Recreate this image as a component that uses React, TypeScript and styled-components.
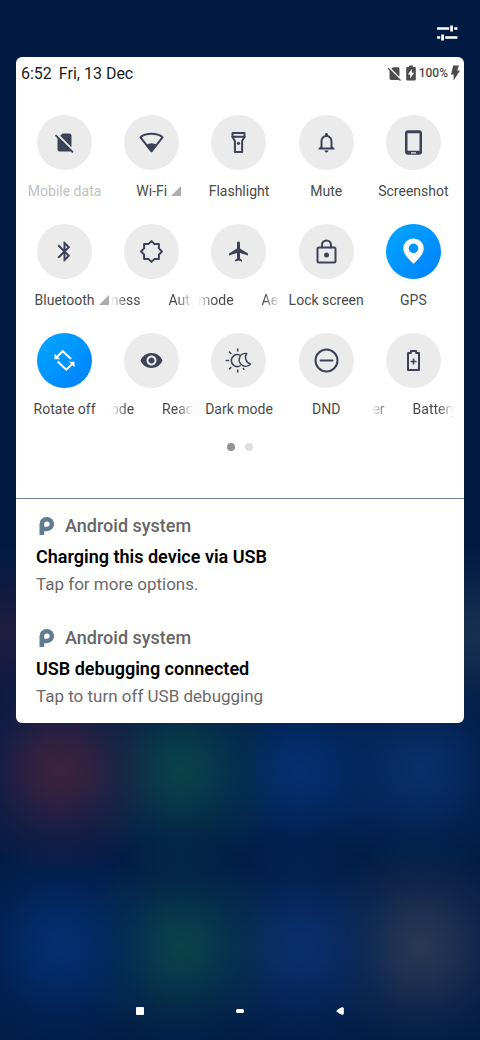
import React from "react";
import styled, { createGlobalStyle, css } from "styled-components";

const GlobalStyle = createGlobalStyle`
  * { box-sizing: border-box; }
  html, body { margin: 0; }
  body { font-family: Roboto, "Liberation Sans", sans-serif; background: #021a42; }
  button { margin: 0; padding: 0; border: 0; background: none; font: inherit; color: inherit; cursor: pointer; }
  svg { display: block; }
  h2, p, ul { margin: 0; padding: 0; }
`;

const blob = (x: string, y: string, color: string, size = "108px") =>
  `radial-gradient(circle ${size} at ${x} ${y}, rgb(${color}) 0%, rgba(${color} / 0.8) 25%, rgba(${color} / 0.3) 62%, rgba(${color} / 0) 100%)`;

const Screen = styled.div`
  min-height: 100vh;
  display: flex;
  flex-direction: column;
  background:
    ${blob("12.5%", "74%", "60 34 64")},
    ${blob("37.5%", "74%", "8 66 74")},
    ${blob("62.5%", "74%", "3 48 112")},
    ${blob("87.5%", "74%", "8 48 106")},
    ${blob("12.5%", "91%", "2 48 112")},
    ${blob("37.5%", "91%", "8 66 74")},
    ${blob("62.5%", "91%", "10 48 108")},
    ${blob("87.5%", "91%", "40 56 82")},
    ${blob("2%", "61%", "32 28 62", "90px")},
    ${blob("99%", "61%", "24 48 80", "90px")},
    linear-gradient(#021a42 0%, #021a42 50%, #021c48 100%);
`;

const TopBar = styled.header`
  display: flex;
  justify-content: flex-end;
  padding: 22px 22px 13px;
`;

const Panel = styled.main`
  margin: 0 16px;
  border-radius: 6px;
  background: #fff;
  overflow: hidden;
`;

const StatusBar = styled.div`
  display: flex;
  align-items: center;
  justify-content: space-between;
  height: 32px;
  padding: 0 3px 0 5px;
  font-size: 16px;
  color: #1c1c1c;
`;

const Clock = styled.div`
  display: flex;
  gap: 7px;
`;

const StatusIcons = styled.div`
  display: flex;
  align-items: center;
  font-size: 12px;
  font-weight: 500;
  gap: 2px;
  color: #4c4c4c;
`;

const TileGrid = styled.section`
  display: grid;
  grid-template-columns: repeat(5, minmax(0, 1fr));
  row-gap: 22px;
  padding: 26px 7px 23px 5px;
`;

const Tile = styled.button`
  display: flex;
  flex-direction: column;
  align-items: center;
  gap: 10px;
  min-width: 0;
`;

const Disc = styled.span<{ $on?: boolean }>`
  display: grid;
  place-items: center;
  width: 55px;
  height: 55px;
  border-radius: 50%;
  color: ${(p) => (p.$on ? "#fff" : "#3d4257")};
  background: ${(p) => (p.$on ? "linear-gradient(135deg, #00a8ff, #0080ff)" : "#ebebeb")};
`;

const labelText = css`
  height: 22px;
  line-height: 22px;
  font-size: 14px;
  white-space: nowrap;
  color: #4a4a4a;
`;

const Label = styled.span<{ $dim?: boolean }>`
  ${labelText}
  position: relative;
  ${(p) => p.$dim && "color: #c0c0c0;"}
`;

const Corner = styled.svg`
  position: absolute;
  left: 100%;
  top: 6px;
  margin-left: 4px;
`;

const Marquee = styled.span`
  ${labelText}
  display: flex;
  gap: 28px;
  width: 82px;
  overflow: hidden;
  mask-image: linear-gradient(90deg, transparent, #000 16px, #000 calc(100% - 16px), transparent);
`;

const Pages = styled.div`
  display: flex;
  justify-content: center;
  gap: 10px;
  padding: 0 0 47px;
`;

const PageDot = styled.span<{ $current?: boolean }>`
  width: 8px;
  height: 8px;
  border-radius: 50%;
  background: ${(p) => (p.$current ? "#919191" : "#dedede")};
`;

const Notifications = styled.ul`
  list-style: none;
  border-top: 1px solid #7184a8;
  padding: 15px 20px;
  display: flex;
  flex-direction: column;
  gap: 30px;
`;

const Notice = styled.li`
  display: flex;
  flex-direction: column;
  line-height: 24px;
`;

const Source = styled.div`
  display: flex;
  align-items: center;
  gap: 7px;
  margin-bottom: 7px;
  font-size: 18px;
  font-weight: 500;
  color: #666;
`;

const Title = styled.h2`
  margin-bottom: 3px;
  font-size: 18px;
  font-weight: 600;
  color: #000;
`;

const Detail = styled.p`
  font-size: 17px;
  color: #6a6a6a;
`;

const NavBar = styled.nav`
  display: flex;
  justify-content: center;
  margin-top: auto;
  padding-bottom: 9px;
  color: #fff;
`;

const NavButton = styled.button`
  display: grid;
  place-items: center;
  width: 100px;
  height: 40px;
`;

const Glyph = ({ children }: { children: React.ReactNode }) => (
  <svg width="29" height="29" viewBox="-14.5 -14.5 29 29" fill="currentColor" aria-hidden="true">
    {children}
  </svg>
);

const Lines = ({ children, w = 2 }: { children: React.ReactNode; w?: number }) => (
  <g fill="none" stroke="currentColor" strokeWidth={w} strokeLinejoin="round" strokeLinecap="round">
    {children}
  </g>
);

const simOffPath =
  "M18.99 5c0-1.1-.89-2-1.99-2h-7L7.66 5.34 19 16.68 18.99 5zM3.65 3.88L2.38 5.15 5 7.77V19c0 1.1.9 2 2 2h10.01c.35 0 .67-.1.96-.26l1.88 1.88 1.27-1.27L3.65 3.88z";

const Centered = ({ d }: { d: string }) => (
  <Glyph>
    <path transform="translate(-12 -12)" d={d} />
  </Glyph>
);

const icons = {
  sim: <Centered d={simOffPath} />,
  wifi: (
    <Glyph>
      <Lines><path d="M-11 -5.2C-6 -9.8 6 -9.8 11 -5.2L0 8.8Z" /></Lines>
      <path d="M-5.6 2.6Q0 -1 5.6 2.6L0 9.5Z" />
    </Glyph>
  ),
  torch: (
    <Glyph>
      <Lines>
        <path d="M-6 -9.5H6V-5.5L3.6 -1.5V9.5H-3.6V-1.5L-6 -5.5Z" />
        <path d="M-6 -5.8H6" />
      </Lines>
      <circle cy="0.8" r="1.6" />
    </Glyph>
  ),
  bell: (
    <Centered d="M12 22c1.1 0 2-.9 2-2h-4c0 1.1.9 2 2 2zm6-6v-5c0-3.07-1.63-5.64-4.5-6.32V4c0-.83-.67-1.5-1.5-1.5s-1.5.67-1.5 1.5v.68C7.64 5.36 6 7.92 6 11v5l-2 2v1h16v-1l-2-2zm-2 1H8v-6c0-2.48 1.51-4.5 4-4.5s4 2.02 4 4.5v6z" />
  ),
  phone: (
    <Glyph>
      <path
        fillRule="evenodd"
        d="M-5.5 -12.3H5.5A3 3 0 0 1 8.5 -9.3V9.3A3 3 0 0 1 5.5 12.3H-5.5A3 3 0 0 1 -8.5 9.3V-9.3A3 3 0 0 1 -5.5 -12.3ZM-6 -9.3V8.3H6V-9.3ZM-2.5 9.8V11H2.5V9.8Z"
      />
    </Glyph>
  ),
  bluetooth: (
    <Centered d="M17.71 7.71L12 2h-1v7.59L6.41 5 5 6.41 10.59 12 5 17.59 6.41 19 11 14.41V22h1l5.71-5.71-4.3-4.29 4.3-4.29zM13 5.83l1.88 1.88L13 9.59V5.83zm1.88 10.46L13 18.17v-3.76l1.88 1.88z" />
  ),
  brightness: (
    <Glyph>
      <Lines>
        <path d="M0 -10.4L3.1 -7.4H7.4V-3.1L10.4 0L7.4 3.1V7.4H3.1L0 10.4L-3.1 7.4H-7.4V3.1L-10.4 0L-7.4 -3.1V-7.4H-3.1Z" />
      </Lines>
    </Glyph>
  ),
  plane: (
    <Glyph>
      <path
        transform="translate(-11.5 -12)"
        d="M21 16v-2l-8-5V3.5c0-.83-.67-1.5-1.5-1.5S10 2.67 10 3.5V9l-8 5v2l8-2.5V19l-2 1.5V22l3.5-1 3.5 1v-1.5L13 19v-5.5l8 2.5z"
      />
    </Glyph>
  ),
  lock: (
    <Glyph>
      <Lines>
        <rect x="-9" y="-4" width="18" height="15" rx="1.5" />
        <path d="M-4.5 -4V-6.6A4.5 4.5 0 0 1 4.5 -6.6V-4" />
      </Lines>
      <circle cy="3.4" r="2.5" />
    </Glyph>
  ),
  pin: (
    <Glyph>
      <path
        fillRule="evenodd"
        d="M0 -13A10 10 0 0 1 10.2 -3C10.2 3 4 8.5 0 12.2C-4 8.5 -10.2 3 -10.2 -3A10 10 0 0 1 0 -13ZM0 -8A4.8 4.8 0 1 0 0 1.6A4.8 4.8 0 1 0 0 -8Z"
      />
    </Glyph>
  ),
  rotate: (
    <Glyph>
      <g fill="none" stroke="currentColor" strokeWidth="2">
        <path d="M-8 -3.2L-1.8 -9.3L6.6 -1.6" />
        <path d="M-6.8 1L1.8 9.2L8 3.2" />
      </g>
      <path d="M-10 -6.8V-1.2H-4.4ZM10 6.8V1.2H4.4Z" />
    </Glyph>
  ),
  eye: (
    <Centered d="M12 4.5C7 4.5 2.73 7.61 1 12c1.73 4.39 6 7.5 11 7.5s9.27-3.11 11-7.5c-1.73-4.39-6-7.5-11-7.5zM12 17c-2.76 0-5-2.24-5-5s2.24-5 5-5 5 2.24 5 5-2.24 5-5 5zm0-8c-1.66 0-3 1.34-3 3s1.34 3 3 3 3-1.34 3-3-1.34-3-3-3z" />
  ),
  dark: (
    <Glyph>
      <Lines w={1.5}>
        <path d="M0.8 -5.6A6 6 0 1 0 1.6 5.4" />
        <path d="M-12.2 0H-10M-9 -8.4L-7.6 -7M-9 8.4L-7.6 7M-0.8 -11.6V-9.4M-0.8 11.6V9.4M5.4 8.8L4.8 8" />
        <path d="M8.2 -7A6.4 6.4 0 1 0 12 3.4A6.8 6.8 0 0 1 8.2 -7Z" />
      </Lines>
    </Glyph>
  ),
  dnd: (
    <Glyph>
      <Lines>
        <circle r="11" />
        <path d="M-6 0H6" />
      </Lines>
    </Glyph>
  ),
  battery: (
    <Glyph>
      <Lines>
        <path d="M-5.5 -7.6H-2.6V-9.4H2.6V-7.6H5.5V9.6H-5.5Z" />
      </Lines>
      <path d="M-0.8 -2H0.8V0.2H3V1.8H0.8V4H-0.8V1.8H-3V0.2H-0.8Z" />
    </Glyph>
  ),
};

type TileData = {
  icon: keyof typeof icons;
  label: string | [string, string];
  on?: boolean;
  dim?: boolean;
  more?: boolean;
};

const tiles: TileData[] = [
  { icon: "sim", label: "Mobile data", dim: true },
  { icon: "wifi", label: "Wi-Fi", more: true },
  { icon: "torch", label: "Flashlight" },
  { icon: "bell", label: "Mute" },
  { icon: "phone", label: "Screenshot" },
  { icon: "bluetooth", label: "Bluetooth", more: true },
  { icon: "brightness", label: ["ness", "Aut"] },
  { icon: "plane", label: ["mode", "Ae"] },
  { icon: "lock", label: "Lock screen" },
  { icon: "pin", label: "GPS", on: true },
  { icon: "rotate", label: "Rotate off", on: true },
  { icon: "eye", label: ["ode", "Read"] },
  { icon: "dark", label: "Dark mode" },
  { icon: "dnd", label: "DND" },
  { icon: "battery", label: ["er", "Battery"] },
];

const notices = [
  { title: "Charging this device via USB", detail: "Tap for more options." },
  { title: "USB debugging connected", detail: "Tap to turn off USB debugging" },
];

const SystemLogo = () => (
  <svg width="22" height="22" viewBox="0 0 22 22" aria-hidden="true">
    <path
      fill="#5f7d8c"
      fillRule="evenodd"
      d="M3.5 20V9.2A7.2 7.2 0 0 1 10.7 2H11A7.1 7.1 0 0 1 11 16.2H8.2V20ZM8.2 11.8V9.2A2.7 2.7 0 1 1 10.9 11.8Z"
    />
  </svg>
);

export default function App() {
  return (
    <>
      <GlobalStyle />
      <Screen>
        <TopBar>
          <button aria-label="Edit tiles">
            <svg width="22" height="22" viewBox="0 0 22 22" fill="#fff" aria-hidden="true">
              <path d="M1 5.2H13.2V7.8H1ZM14.2 3.4H17V9.6H14.2ZM18.2 5.2H21.4V7.8H18.2ZM1 14.2H4.2V16.8H1ZM5.2 12.4H8V18.6H5.2ZM9.2 14.2H21.4V16.8H9.2Z" />
            </svg>
          </button>
        </TopBar>
        <Panel>
          <StatusBar>
            <Clock>
              <span>6:52</span>
              <span>Fri, 13 Dec</span>
            </Clock>
            <StatusIcons>
              <svg width="17" height="17" viewBox="0 0 24 24" fill="currentColor" aria-hidden="true">
                <path d={simOffPath} />
              </svg>
              <svg width="12" height="16" viewBox="0 0 12 16" fill="currentColor" aria-hidden="true">
                <path
                  fillRule="evenodd"
                  d="M4 0.5H8V2H9.8A1 1 0 0 1 10.8 3V14.5A1 1 0 0 1 9.8 15.5H2.2A1 1 0 0 1 1.2 14.5V3A1 1 0 0 1 2.2 2H4ZM6.8 4L2.8 9.4H5.2V13.4L9.2 7.8H6.8Z"
                />
              </svg>
              <span>100%</span>
              <svg width="11" height="16" viewBox="1 0 11 16" fill="currentColor" aria-hidden="true">
                <path d="M4.2 0.5H10L8.2 5.6H11L4.6 15.5V9.4H2Z" />
              </svg>
            </StatusIcons>
          </StatusBar>
          <TileGrid>
            {tiles.map((t) => (
              <Tile key={t.icon}>
                <Disc $on={t.on}>{icons[t.icon]}</Disc>
                {Array.isArray(t.label) ? (
                  <Marquee>
                    <span>{t.label[0]}</span>
                    <span>{t.label[1]}</span>
                  </Marquee>
                ) : (
                  <Label $dim={t.dim}>
                    {t.label}
                    {t.more && (
                      <Corner width="10" height="10" viewBox="0 0 10 10" aria-hidden="true">
                        <path d="M10 0V10H0Z" fill="#adadad" />
                      </Corner>
                    )}
                  </Label>
                )}
              </Tile>
            ))}
          </TileGrid>
          <Pages>
            <PageDot $current />
            <PageDot />
          </Pages>
          <Notifications>
            {notices.map((n) => (
              <Notice key={n.title}>
                <Source>
                  <SystemLogo />
                  Android system
                </Source>
                <Title>{n.title}</Title>
                <Detail>{n.detail}</Detail>
              </Notice>
            ))}
          </Notifications>
        </Panel>
        <NavBar>
          <NavButton aria-label="Recent apps">
            <svg width="8" height="8" viewBox="0 0 8 8" fill="currentColor"><rect width="8" height="8" rx="1" /></svg>
          </NavButton>
          <NavButton aria-label="Home">
            <svg width="8" height="4" viewBox="0 0 8 4" fill="currentColor"><rect width="8" height="4" rx="1.5" /></svg>
          </NavButton>
          <NavButton aria-label="Back">
            <svg width="8" height="8" viewBox="0 0 8 8" fill="currentColor">
              <path d="M6.4 0.2Q7.8 0.2 7.8 1.6V6.4Q7.8 7.8 6.4 7.8Q4.6 7.8 0.8 4.8Q0 4 0.8 3.2Q4.6 0.2 6.4 0.2Z" />
            </svg>
          </NavButton>
        </NavBar>
      </Screen>
    </>
  );
}
